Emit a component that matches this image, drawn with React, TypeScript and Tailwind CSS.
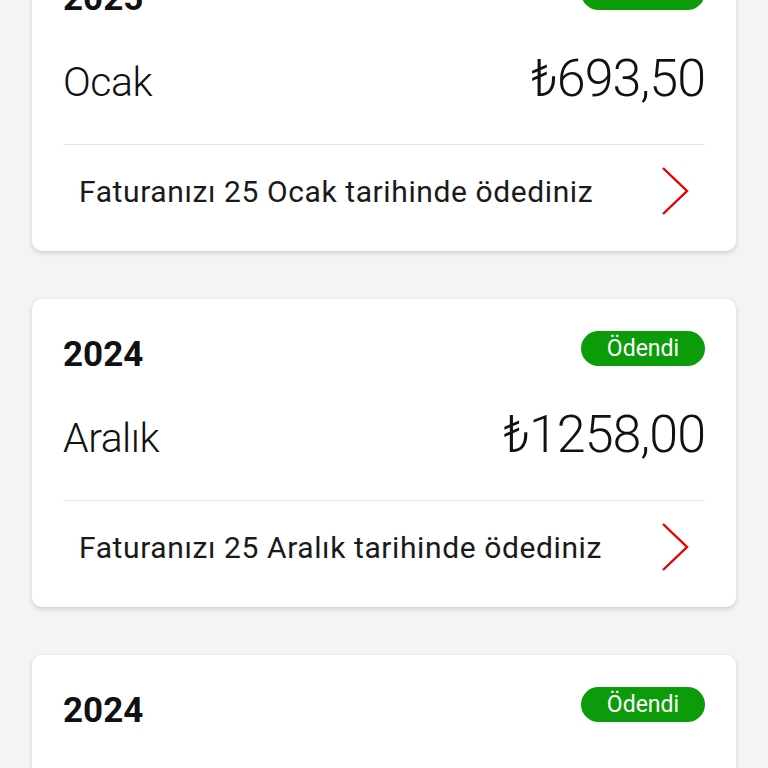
import React from 'react'

const bills = [
  { year: '2025', month: 'Ocak', amount: '₺693,50', note: 'Faturanızı 25 Ocak tarihinde ödediniz' },
  { year: '2024', month: 'Aralık', amount: '₺1258,00', note: 'Faturanızı 25 Aralık tarihinde ödediniz' },
  { year: '2024', month: 'Kasım', amount: '₺1258,00', note: 'Faturanızı 25 Kasım tarihinde ödediniz' },
]

function Chevron() {
  return (
    <svg width="28" height="48" viewBox="0 0 28 48" fill="none">
      <path d="M2 1 L26 24 L2 47" stroke="#e60000" strokeWidth="2.4" strokeLinejoin="miter" />
    </svg>
  )
}

function BillCard({ bill }: { bill: (typeof bills)[number] }) {
  return (
    <div className="bg-white rounded-[10px] shadow-[0_2px_5px_rgba(0,0,0,0.16)] px-[31px] pt-[32px] h-[308px] shrink-0">
      {/* year + status */}
      <div className="flex justify-between items-start">
        <div className="mt-[4px] text-[35px] leading-[40px] font-bold text-[#111]">{bill.year}</div>
        <div className="h-[35px] w-[124px] rounded-full bg-[#0c9c0a] flex items-center justify-center text-white text-[23px] leading-none">
          Ödendi
        </div>
      </div>

      {/* month + amount */}
      <div className="mt-[30px] flex justify-between items-baseline h-[60px] font-light text-[#111]">
        <span className="text-[41px] leading-[60px] tracking-[-0.5px]">{bill.month}</span>
        <span className="text-[52px] leading-[60px] tracking-[-1px]">{bill.amount}</span>
      </div>

      <div className="mt-[35px] h-px bg-[#e4e4e4]" />

      <div className="flex items-center justify-between pl-4 pr-4 pt-[22px]">
        <span className="text-[30px] leading-none text-[#1a1a1a] mt-[2px] tracking-[0.6px]">{bill.note}</span>
        <Chevron />
      </div>
    </div>
  )
}

export default function App() {
  return (
    <div className="min-h-screen bg-[#f4f4f4] overflow-hidden" style={{ fontFamily: 'Roboto, "Noto Sans", sans-serif' }}>
      <div className="-mt-[57px] px-[32px] flex flex-col gap-[48px] h-[825px]">
        {bills.map((b, i) => (
          <BillCard key={i} bill={b} />
        ))}
      </div>
    </div>
  )
}
